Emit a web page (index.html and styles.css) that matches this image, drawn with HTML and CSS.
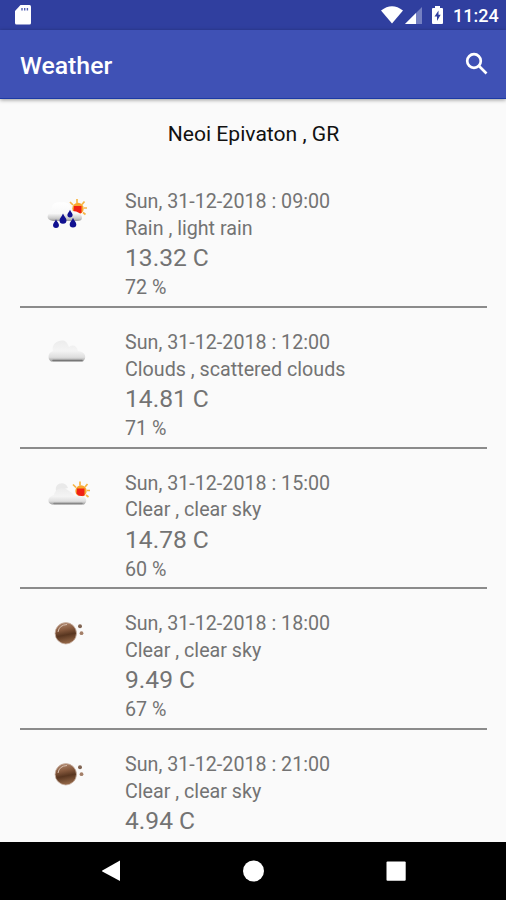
FILE: index.html
```html
<!DOCTYPE html>
<html lang="en">
<head>
<meta charset="utf-8">
<title>Weather</title>
<link rel="stylesheet" href="styles.css">
</head>
<body>
<svg class="defs" aria-hidden="true">
  <defs>
    <linearGradient id="cloud" x1="0" y1="0" x2="0" y2="1">
      <stop offset="0" stop-color="#ececec"/><stop offset=".5" stop-color="#f4f4f4"/><stop offset=".8" stop-color="#dedede"/><stop offset="1" stop-color="#999"/>
    </linearGradient>
    <linearGradient id="rainCloud" x1="0" y1="0" x2="0" y2="1">
      <stop offset="0" stop-color="#fff"/><stop offset=".6" stop-color="#f8f8f8"/><stop offset=".85" stop-color="#ccc"/><stop offset="1" stop-color="#999"/>
    </linearGradient>
    <linearGradient id="moon" x1="0" y1="0" x2=".2" y2="1">
      <stop offset="0" stop-color="#b58e75"/><stop offset=".4" stop-color="#875a3e"/><stop offset=".65" stop-color="#583620"/><stop offset="1" stop-color="#8f6344"/>
    </linearGradient>
    <g id="sun">
      <path d="M77 19v4M70 22l3 3M84.500 21.500l-2.500 3M84 28h3M83 32.500l2.500 2" stroke="#f6b545" stroke-width="1.700"/>
      <circle cx="78" cy="28.500" r="5.700" fill="#f9a52c"/>
      <path d="M74 26h7.500v7l-5 1-3-3z" fill="#f02015"/>
    </g>
    <path id="drop" d="M0-5C1-2 3.500-.5 3.500 1.800A3.500 3.500 0 0 1-3.500 1.800C-3.500-.5-1-2 0-5z" fill="#101090"/>
  </defs>
</svg>
<header class="status">
  <svg class="sd" viewBox="0 0 16 20"><path d="M5.500 0H14.500Q16 0 16 1.500V18Q16 19.500 14.500 19.500H1.500Q0 19.500 0 18V6z" fill="#fff"/><path d="M7 3v2.500M9.700 3v2.500M12.400 3v2.500" stroke="#5260b2" stroke-width="1.400"/></svg>
  <svg class="wifi" viewBox="0 0 22 18"><path d="M0 4.500Q11-4 22 4.500L11 17.500z" fill="#fff"/></svg>
  <svg class="signal" viewBox="0 0 17 17"><path d="M17 0V17H0z" fill="#7580c2"/><path d="M11 6V17H0z" fill="#fff"/></svg>
  <svg class="battery" viewBox="0 0 11 18"><path d="M3 0h5v2h2q1 0 1 1v14q0 1-1 1H1q-1 0-1-1V3q0-1 1-1h2z" fill="#fff"/><path d="M6.500 4.500L2.500 10.500H5V15L8.700 8.800H6.500z" fill="#303f9f"/></svg>
  <span class="clock">11:24</span>
</header>
<div class="appbar">
  <h1>Weather</h1>
  <svg class="search" viewBox="0 0 24 24"><circle cx="9" cy="9" r="6.800"/><path d="M14 14L21.500 21.500"/></svg>
</div>
<main>
  <h2>Neoi Epivaton , GR</h2>
  <section class="row">
    <svg class="icon" viewBox="40 13 56 38"><use href="#sun"/><path d="M53 41C45 40 47 33 52 32C50 25 55 21 61 22.500C68 21 71 26 72 31C78 31 82 34 82 38Q82 41 77 41z" fill="url(#rainCloud)"/><use href="#drop" x="63" y="38.500"/><use href="#drop" transform="translate(56 43.500) scale(.85)"/><use href="#drop" transform="translate(73 42.500) scale(.95)"/><use href="#drop" transform="translate(70 33.500) scale(.75)"/></svg>
    <div class="info"><p>Sun, 31-12-2018 : 09:00</p><p>Rain , light rain</p><p class="temp">13.32 C</p><p>72 %</p></div>
  </section>
  <section class="row">
    <svg class="icon" viewBox="40 13 56 38"><path d="M51 40.500C47 38 48 31 53 30C51 23 58 19 63 19.500C67 20 68 24 69 26C73 23 77 25 78 30C86 31 87 37 83 40.500z" fill="url(#cloud)"/><path d="M53 39.500H82" stroke="#777" stroke-width="1.500" stroke-linecap="round"/></svg>
    <div class="info"><p>Sun, 31-12-2018 : 12:00</p><p>Clouds , scattered clouds</p><p class="temp">14.81 C</p><p>71 %</p></div>
  </section>
  <section class="row">
    <svg class="icon" viewBox="40 13 56 38"><use href="#sun" x="3" y=".5"/><path d="M56 29C54 21 65 18 68 26" fill="#e9e9e9"/><path d="M52 42.500C46 41 48 34 54 33C55 26 64 24 69 29Q73 31 75 34Q81 33 84 35C87 37 87 40 84 42.500z" fill="url(#cloud)"/><path d="M54 41.500H82" stroke="#888" stroke-width="1.500" stroke-linecap="round"/></svg>
    <div class="info"><p>Sun, 31-12-2018 : 15:00</p><p>Clear , clear sky</p><p class="temp">14.78 C</p><p>60 %</p></div>
  </section>
  <section class="row">
    <svg class="icon" viewBox="40 13 56 38"><g id="night"><circle cx="65.800" cy="31.300" r="10.700" fill="url(#moon)" stroke="#c9b3a4" stroke-width=".8"/><path d="M58 30Q59 23 67 22.500" stroke="#d8c0b0" fill="none"/><circle cx="80" cy="24.200" r="2" fill="#806452"/><circle cx="81.500" cy="31.200" r="1.900" fill="#a47f68"/></g></svg>
    <div class="info"><p>Sun, 31-12-2018 : 18:00</p><p>Clear , clear sky</p><p class="temp">9.49 C</p><p>67 %</p></div>
  </section>
  <section class="row">
    <svg class="icon" viewBox="40 13 56 38"><use href="#night"/></svg>
    <div class="info"><p>Sun, 31-12-2018 : 21:00</p><p>Clear , clear sky</p><p class="temp">4.94 C</p></div>
  </section>
</main>
<nav>
  <svg viewBox="0 0 24 24"><path d="M2.300 11.500L20 1.500V22L2.300 12.500Q1.500 12 2.300 11.500z"/></svg>
  <svg viewBox="0 0 24 24"><circle cx="11.500" cy="12" r="10.500"/></svg>
  <svg viewBox="0 0 24 24"><rect x="2.500" y="2.500" width="19.200" height="19.200" rx="1"/></svg>
</nav>
</body>
</html>
```

FILE: styles.css
```css
* { box-sizing: border-box; }
body {
  margin: 0;
  width: 506px;
  height: 900px;
  overflow: hidden;
  display: flex;
  flex-direction: column;
  background: #fafafa;
  color: #737373;
  font-family: Roboto, sans-serif;
}
h1, h2, p { margin: 0; }
.defs { position: absolute; width: 0; height: 0; }
.status {
  height: 30px;
  flex: none;
  display: flex;
  align-items: center;
  padding: 0 9px 0 15px;
  background: #303f9f;
  color: #fff;
}
.sd { width: 16px; height: 20px; margin-right: auto; }
.wifi { width: 22px; height: 18px; margin-right: 2px; }
.signal { width: 17px; height: 17px; margin-right: 10px; }
.battery { width: 11px; height: 18px; margin-right: 10px; }
.clock { width: 44px; font-size: 18px; font-weight: 500; line-height: 30px; padding-top: 2px; white-space: nowrap; }
.appbar {
  height: 69px;
  flex: none;
  display: flex;
  align-items: center;
  justify-content: space-between;
  padding: 3px 17px 0 20px;
  background: #3f51b5;
  border-bottom: 1px solid #1c3aa5;
  box-shadow: 0 1px 4px rgba(0, 0, 0, .4);
  color: #fff;
}
h1 { font-size: 24.8px; font-weight: 500; line-height: 32px; }
.search { width: 24px; height: 24px; margin-top: -3px; fill: none; stroke: #fff; stroke-width: 2.7; }
main { flex: 1; min-height: 0; overflow: hidden; padding: 22px 19px 0 20px; }
h2 {
  height: 46.3px;
  color: #111;
  font-size: 21.1px;
  font-weight: 400;
  line-height: 26px;
  text-align: center;
}
.row {
  height: 140.67px;
  display: flex;
  padding-top: 22px;
  border-bottom: 2px solid #8b8b8b;
}
.icon { width: 56px; height: 38px; margin: 4px 29px 0 20px; }
.info { font-size: 19.7px; line-height: 26.6px; white-space: nowrap; }
.info .temp { font-size: 24.6px; line-height: 31px; margin-bottom: 2px; }
nav {
  height: 58px;
  flex: none;
  display: flex;
  justify-content: space-between;
  align-items: center;
  padding: 0 98px 0 100px;
  background: #000;
}
nav svg { width: 24px; height: 24px; fill: #fff; }
```
